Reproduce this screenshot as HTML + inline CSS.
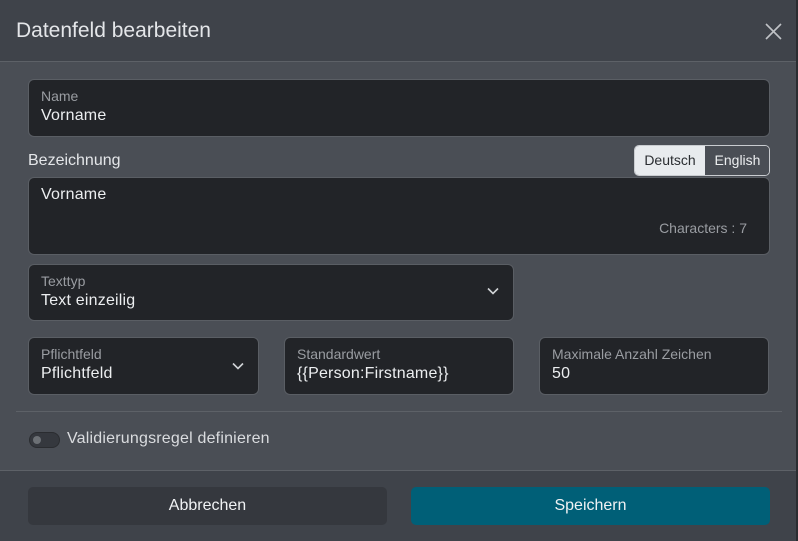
<!DOCTYPE html>
<html><head><style>
*{box-sizing:border-box;margin:0;padding:0}
body{width:798px;height:541px;background:#2b2d31;font-family:"Liberation Sans",sans-serif;position:relative;overflow:hidden}
.m{position:absolute;left:0;top:0;width:796px;height:541px;background:#4a4e55}
.hd{position:absolute;left:0;top:0;width:796px;height:62px;background:#3f434a;border-bottom:1px solid #5d6167}
.hd h1{position:absolute;left:16px;top:19px;font-size:21px;font-weight:normal;color:#e4e6e9}
.box{position:absolute;background:#222428;border:1px solid #5a5e64;border-radius:6px}
.lb{position:absolute;left:12px;top:8px;font-size:14px;color:#9a9da2}
.v{position:absolute;left:12px;top:27px;font-size:16px;color:#eceef0;letter-spacing:0.2px}
.chev{position:absolute;top:22px;width:12px;height:8px}
.ft{position:absolute;left:0;top:470px;width:796px;height:71px;background:#3f434a;border-top:1px solid #5d6167}
.btn{position:absolute;top:16px;height:38px;border-radius:5px;font-size:16px;color:#f0f2f4;text-align:center;line-height:38px}
</style></head><body>
<div class="m">
<div class="hd"><h1>Datenfeld bearbeiten</h1>
<svg style="position:absolute;left:765px;top:23px" width="17" height="17" viewBox="0 0 17 17"><path d="M1 1L16 16M16 1L1 16" stroke="#bfc2c6" stroke-width="1.6"/></svg></div>
<div class="box" style="left:28px;top:79px;width:742px;height:58px"><div class="lb">Name</div><div class="v">Vorname</div></div>
<div style="position:absolute;left:28px;top:152px;font-size:16px;color:#e4e6e9">Bezeichnung</div>
<div style="position:absolute;left:634px;top:145px;width:136px;height:31px;border:1px solid #c9ccd0;border-radius:5px;overflow:hidden;font-size:14px;line-height:29px">
<div style="position:absolute;left:0;top:0;width:70px;height:29px;background:#e8ebee;color:#2a2d31;text-align:center">Deutsch</div>
<div style="position:absolute;left:70px;top:0;width:65px;height:29px;background:#4a4e55;color:#eceef0;text-align:center">English</div></div>
<div class="box" style="left:28px;top:177px;width:742px;height:78px"><div class="v" style="top:8px">Vorname</div>
<div style="position:absolute;right:22px;top:42px;font-size:14px;color:#9a9da2">Characters : 7</div></div>
<div class="box" style="left:28px;top:264px;width:486px;height:57px"><div class="lb">Texttyp</div><div class="v">Text einzeilig</div>
<svg class="chev" style="left:458px" viewBox="0 0 12 8"><path d="M1 1.5L6 6.5L11 1.5" fill="none" stroke="#d0d3d6" stroke-width="1.6"/></svg></div>
<div class="box" style="left:28px;top:337px;width:231px;height:58px"><div class="lb">Pflichtfeld</div><div class="v">Pflichtfeld</div>
<svg class="chev" style="left:203px;top:24px" viewBox="0 0 12 8"><path d="M1 1.5L6 6.5L11 1.5" fill="none" stroke="#d0d3d6" stroke-width="1.6"/></svg></div>
<div class="box" style="left:284px;top:337px;width:230px;height:58px"><div class="lb">Standardwert</div><div class="v">{{Person:Firstname}}</div></div>
<div class="box" style="left:539px;top:337px;width:230px;height:58px"><div class="lb">Maximale Anzahl Zeichen</div><div class="v">50</div></div>
<div style="position:absolute;left:16px;top:411px;width:766px;height:1px;background:#5d6167"></div>
<div style="position:absolute;left:29px;top:432px;width:31px;height:16px;border-radius:8px;background:#35383e;border:1px solid #2a2c30"><div style="position:absolute;left:3px;top:3px;width:8px;height:8px;border-radius:50%;background:#6c7075"></div></div>
<div style="position:absolute;left:67px;top:430px;font-size:16px;color:#dadcdf;letter-spacing:0.2px">Validierungsregel definieren</div>
<div class="ft">
<div class="btn" style="left:28px;width:359px;background:#35383e">Abbrechen</div>
<div class="btn" style="left:411px;width:359px;background:#005f77">Speichern</div></div>
</div>
</body></html>
